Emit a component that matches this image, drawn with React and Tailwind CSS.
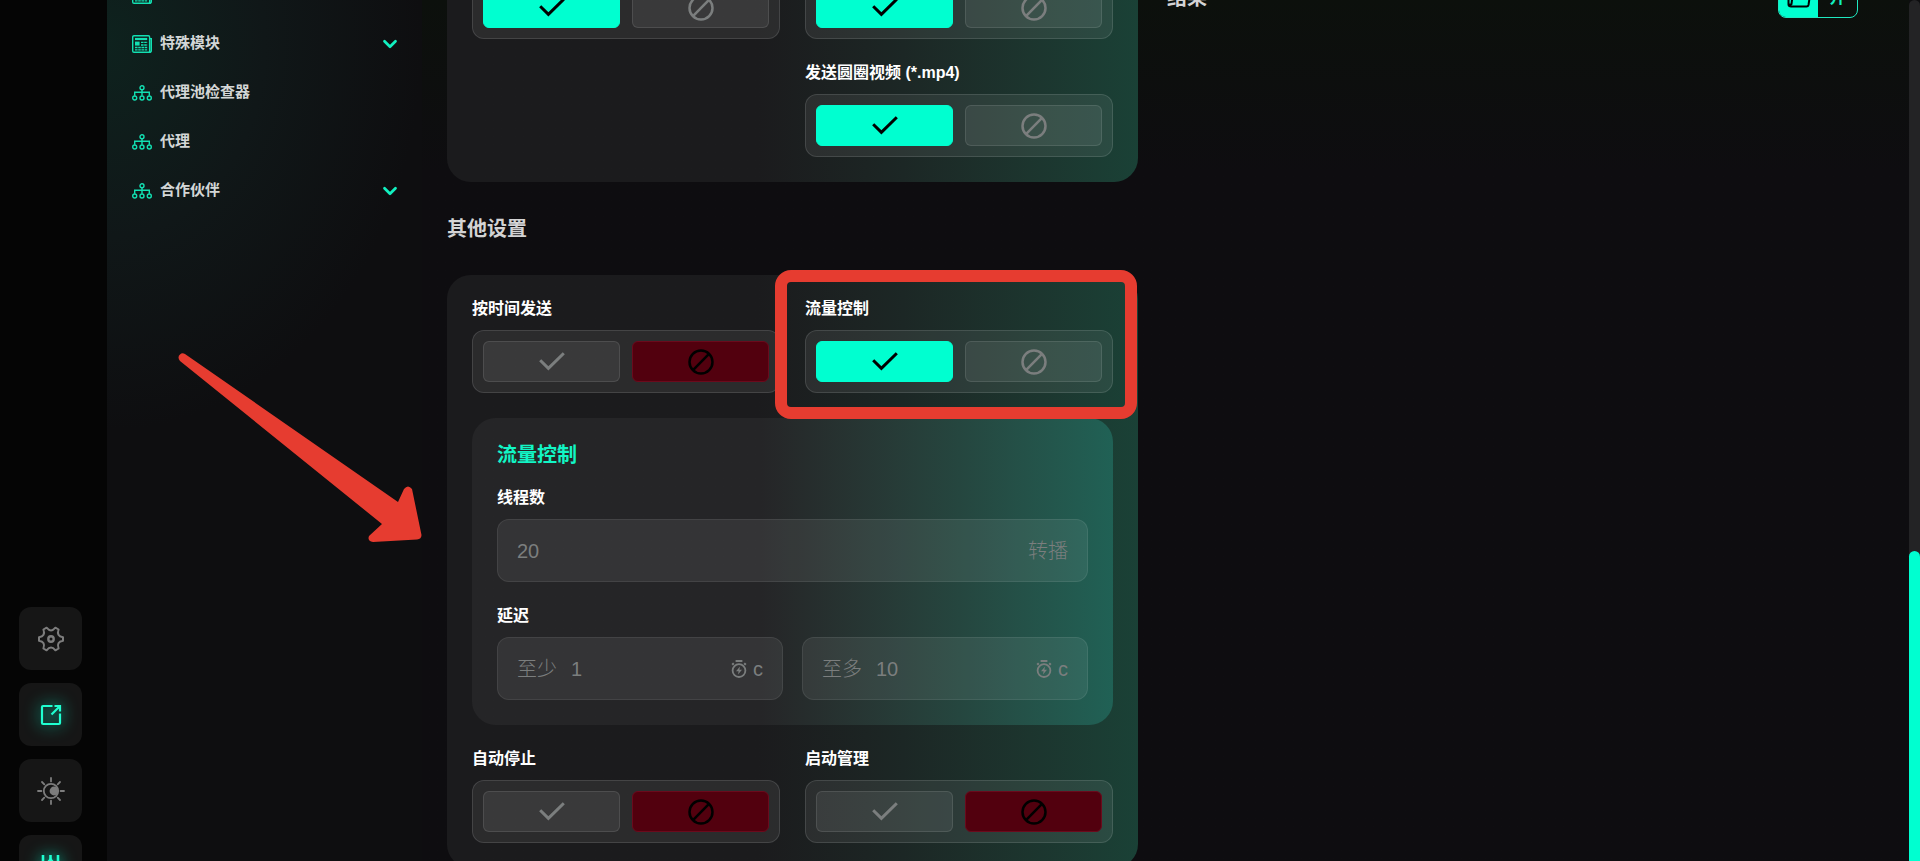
import React, { useState } from 'react';
import { ChevronDown } from 'lucide-react';

const TreeIcon = () => (
    <svg viewBox="0 0 20 16" className="h-4 w-5 shrink-0" fill="none" stroke="#12e0b2" strokeWidth="1.4">
        <circle cx="10" cy="2.8" r="2" />
        <circle cx="2.7" cy="13" r="2" />
        <circle cx="10" cy="13" r="2" />
        <circle cx="17.3" cy="13" r="2" />
        <path d="M10 5v5.8M2.7 10.8V7.3h14.6v3.5" />
    </svg>
);

const NewsIcon = () => (
    <svg viewBox="0 0 20 18" className="h-[18px] w-5 shrink-0" fill="none" stroke="#12e0b2" strokeWidth="1.4">
        <path d="M17.6 3.6h1.7v12.1a1.6 1.6 0 0 1-1.8 1.6M2 .7h14.4a1.2 1.2 0 0 1 1.2 1.2V17.3H2A1.3 1.3 0 0 1 .7 16V2A1.3 1.3 0 0 1 2 .7z" />
        <path d="M3 4h12.2" strokeWidth="2.2" />
        <path d="M3 6.6h4.6v4H3z" fill="#12e0b2" stroke="none" />
        <path d="M9 7.4h6.6M9 10h6.6M3 12.5h12.6M3 14.9h12.6" strokeDasharray="2.6 .6" />
    </svg>
);

const CheckIcon = () => (
    <svg viewBox="0 0 26 19" className="h-[19px] w-[26px]" fill="none" stroke="currentColor" strokeWidth="3">
        <path d="M1.2 8.200 9.400 16.400 24.800 1.200" />
    </svg>
);

const BanIcon = () => (
    <svg viewBox="0 0 26 26" className="h-[26px] w-[26px]" fill="none" stroke="currentColor" strokeWidth="2.5">
        <circle cx="13" cy="13" r="11.5" />
        <path d="M5 21.2 21 4.8" />
    </svg>
);

const TimerIcon = () => (
    <svg viewBox="0 0 16 18" className="h-[18px] w-4" fill="none" stroke="currentColor" strokeWidth="1.8">
        <circle cx="8" cy="10.600" r="6.400" />
        <path d="M4.600 1h6.800M13.200 3.200l1.600 1.600M2.800 3.200 1.200 4.800" strokeWidth="2" />
        <path d="M9 6.400 5 11.200h2.600l-.6 3.400L11 9.800H8.400z" fill="currentColor" stroke="none" />
    </svg>
);

const GearIcon = () => (
    <svg viewBox="0 0 26 26" className="h-[26px] w-[26px]" fill="none" stroke="currentColor" strokeWidth="2" strokeLinejoin="round">
        <path d="M17.400 1.700 20.600 3.500Q18.100 10 25 11.200V14.800Q18.100 16 20.600 22.500L17.400 24.300Q13 18.900 8.600 24.300L5.400 22.500Q7.900 16 1 14.800V11.200Q7.900 10 5.400 3.500L8.600 1.700Q13 7.100 17.400 1.700z" />
        <circle cx="13" cy="13" r="2.700" strokeWidth="2.400" />
    </svg>
);

const ExportIcon = () => (
    <svg viewBox="0 0 22 22" className="h-[22px] w-[22px] drop-shadow-[0_0_8px_#00ffd0]" fill="none" stroke="currentColor" strokeWidth="2.200">
        <path d="M12.500 2H3a1 1 0 0 0-1 1v16a1 1 0 0 0 1 1h16a1 1 0 0 0 1-1V9.500M11.500 10.500 20 2M14.500 2H20v5.500" />
    </svg>
);

const SunIcon = () => (
    <svg viewBox="0 0 28 28" className="h-7 w-7" fill="none" stroke="currentColor" strokeWidth="1.800" strokeLinecap="round">
        <circle cx="14" cy="14" r="7.200" />
        <circle cx="17" cy="14" r="4.400" fill="currentColor" stroke="none" />
        <path d="M14 1v3.400M14 23.600V27M1 14h3.400M23.600 14H27M5 5l2.300 2.300M20.700 20.700l2.300 2.300M5 23l2.300-2.300M20.700 7.300 23 5" />
    </svg>
);

const SlidersIcon = () => (
    <svg viewBox="0 0 22 24" className="h-6 w-[22px] drop-shadow-[0_0_8px_#00ffd0]" fill="none" stroke="currentColor" strokeWidth="2.600">
        <path d="M3 0v24M10.500 0v5.500M18 0v24M10.500 12v12" />
        <path d="M10.500 4.500 7.500 8v3.500h6V8z" />
    </svg>
);

const railItems = [
    { name: '设置', icon: GearIcon, active: false },
    { name: '导出', icon: ExportIcon, active: true },
    { name: '主题', icon: SunIcon, active: false },
    { name: '参数', icon: SlidersIcon, active: true },
];

const menuItems = [
    { id: 'modules', icon: NewsIcon },
    { id: 'special', label: '特殊模块', icon: NewsIcon, expandable: true },
    { id: 'checker', label: '代理池检查器', icon: TreeIcon },
    { id: 'proxy', label: '代理', icon: TreeIcon },
    { id: 'partners', label: '合作伙伴', icon: TreeIcon, expandable: true },
];

const Toggle = ({ label, initial }) => {
    const [on, setOn] = useState(initial);
    const base = 'flex h-[41px] flex-1 items-center justify-center rounded-md border';
    const idle = 'border-white/10 bg-white/7 text-[#7b7e7e]';

    return (
        <div role="group" aria-label={label}>
            {label && <div className="mb-3 text-base leading-[18px] font-bold text-white">{label}</div>}
            <div className="flex gap-3 rounded-xl border border-white/12 bg-white/7 p-[10px]">
                <button
                    aria-label="开启"
                    aria-pressed={on}
                    onClick={() => setOn(true)}
                    className={`${base} ${on ? 'border-[#00ffd0] bg-[#00ffd0] text-black' : idle}`}
                >
                    <CheckIcon />
                </button>
                <button
                    aria-label="关闭"
                    aria-pressed={!on}
                    onClick={() => setOn(false)}
                    className={`${base} ${on ? idle : 'border-[#6b0a1c] bg-[#52000e] text-black'}`}
                >
                    <BanIcon />
                </button>
            </div>
        </div>
    );
};

const Field = ({ id, prefix, placeholder, children }) => (
    <div className="flex h-[63px] min-w-0 flex-1 items-center rounded-xl border border-white/8 bg-white/7 px-[19px] text-xl text-[#7b7e7e]">
        {prefix && <label htmlFor={id} className="mr-3.5 shrink-0 font-light">{prefix}</label>}
        <input
            id={id}
            type="text"
            placeholder={placeholder}
            className="w-full min-w-0 bg-transparent outline-none placeholder:text-[#7b7e7e]"
        />
        <span className="flex shrink-0 items-center gap-1.5 font-light">{children}</span>
    </div>
);

const panel = 'rounded-3xl bg-linear-to-r from-[#1b1b1d] from-45% via-[#1c2725] via-66% to-[#1a4136] p-[25px]';

const App = () => {
    return (
        <div className="flex h-screen overflow-hidden bg-[#0d0d0f] font-['Liberation_Sans','Noto_Sans_CJK_SC',sans-serif]">
            <nav className="flex w-[107px] shrink-0 flex-col justify-end bg-[#050505] pl-[19px]">
                <div className="-mb-[37px] flex flex-col gap-[13px]">
                    {railItems.map(({ name, icon: Icon, active }) => (
                        <button
                            key={name}
                            aria-label={name}
                            className={`flex h-[63px] w-[63px] items-center justify-center rounded-xl bg-[#161616] ${active ? 'text-[#1fffd0]' : 'text-[#7d7d7d]'}`}
                        >
                            <Icon />
                        </button>
                    ))}
                </div>
            </nav>

            <aside className="w-[315px] shrink-0 bg-[radial-gradient(ellipse_100%_45%_at_0%_5%,#0e221e_0%,#101718_50%,#0e0e10_100%)]">
                <ul className="-mt-[30px] px-[25px]">
                    {menuItems.map(({ id, label, icon: Icon, expandable }) => (
                        <li key={id}>
                            <a href={`#${id}`} aria-label={label || id} className="flex h-[49px] items-center gap-2 text-[15px] font-bold text-[#d3d6d6]">
                                <Icon />
                                <span className="flex-1">{label}</span>
                                {expandable && <ChevronDown size={22} strokeWidth={3} className="-mr-[4px] text-[#12f0c0]" />}
                            </a>
                        </li>
                    ))}
                </ul>
            </aside>

            <main className="grid min-w-0 flex-1 grid-cols-2 items-start gap-[29px] bg-linear-to-b from-[#0c100c] to-[#0e0d10] to-20% pr-[51px] pl-[25px]">
                <div className="-mt-[49px]">
                    <section className={panel}>
                        <div className="grid grid-cols-2 gap-[25px]">
                            <Toggle initial={true} />
                            <Toggle initial={true} />
                            <div className="col-start-2">
                                <Toggle label="发送圆圈视频 (*.mp4)" initial={true} />
                            </div>
                        </div>
                    </section>

                    <h2 className="mt-[33px] mb-8 text-xl font-bold text-[#d3d3d4]">其他设置</h2>

                    <section className={panel}>
                        <div className="grid grid-cols-2 gap-[25px]">
                            <Toggle label="按时间发送" initial={false} />
                            <div className="relative">
                                <Toggle label="流量控制" initial={true} />
                                <div className="pointer-events-none absolute -top-[30px] -right-6 -bottom-[26px] -left-[30px] z-10 rounded-2xl border-12 border-[#e63c30]" />
                            </div>

                            <div className="col-span-2 rounded-3xl bg-linear-to-r from-[#252527] from-45% via-[#25463f] via-76% to-[#206155] p-[25px]">
                                <h3 className="mb-[22px] text-xl leading-6 font-bold text-[#12f5c5]">流量控制</h3>
                                <label htmlFor="threads" className="mb-3 block text-base leading-[18px] font-bold text-white">线程数</label>
                                <Field id="threads" placeholder="20">转播</Field>
                                <div className="mt-[25px] mb-3 text-base leading-[18px] font-bold text-white">延迟</div>
                                <div className="flex gap-[19px]">
                                    <Field id="delay-min" prefix="至少" placeholder="1"><TimerIcon />с</Field>
                                    <Field id="delay-max" prefix="至多" placeholder="10"><TimerIcon />с</Field>
                                </div>
                            </div>

                            <Toggle label="自动停止" initial={false} />
                            <Toggle label="启动管理" initial={false} />
                        </div>
                    </section>
                </div>

                <div className="-mt-[22px] flex items-center justify-between">
                    <h2 className="text-xl font-bold text-[#d3d3d4]">结果</h2>
                    <div className="flex h-10 w-20 overflow-hidden rounded-lg border border-[#1fe8c0]">
                        <button aria-label="文件夹" className="flex flex-1 items-center justify-center bg-[#00ffd0] text-black">
                            <svg viewBox="0 0 24 20" className="h-5 w-6" fill="none" stroke="currentColor" strokeWidth="2">
                                <path d="M1.500 16V3.500a2 2 0 0 1 2-2h5l2 3h8a2 2 0 0 1 2 2M3.500 18.500h16a2 2 0 0 0 2-1.500l1.200-8a2 2 0 0 0-2-2.500H7.500a2 2 0 0 0-2 1.500L4.500 16a2 2 0 0 1-3 0 2.400 2.400 0 0 0 2 2.500" />
                            </svg>
                        </button>
                        <button className="flex-1 text-base font-bold text-[#12f0c0]">开</button>
                    </div>
                </div>
            </main>

            <div className="flex w-[11px] shrink-0 flex-col justify-end rounded-t-lg bg-[#232325]">
                <div className="h-[36%] rounded-t-lg bg-[#00ffd0]" />
            </div>

            <svg viewBox="0 0 250 200" className="pointer-events-none absolute top-[350px] left-[176px] h-[200px] w-[250px]">
                <path
                    d="M9 4 222 152 228 139Q232 134 236 139L245.500 185Q245.500 189 241 189.500L197 192Q191 191 193 186L206 174 4 11Q1 7 4 4.500Q6 2.500 9 4z"
                    fill="#e63c30"
                />
            </svg>
        </div>
    );
};

export default App;
